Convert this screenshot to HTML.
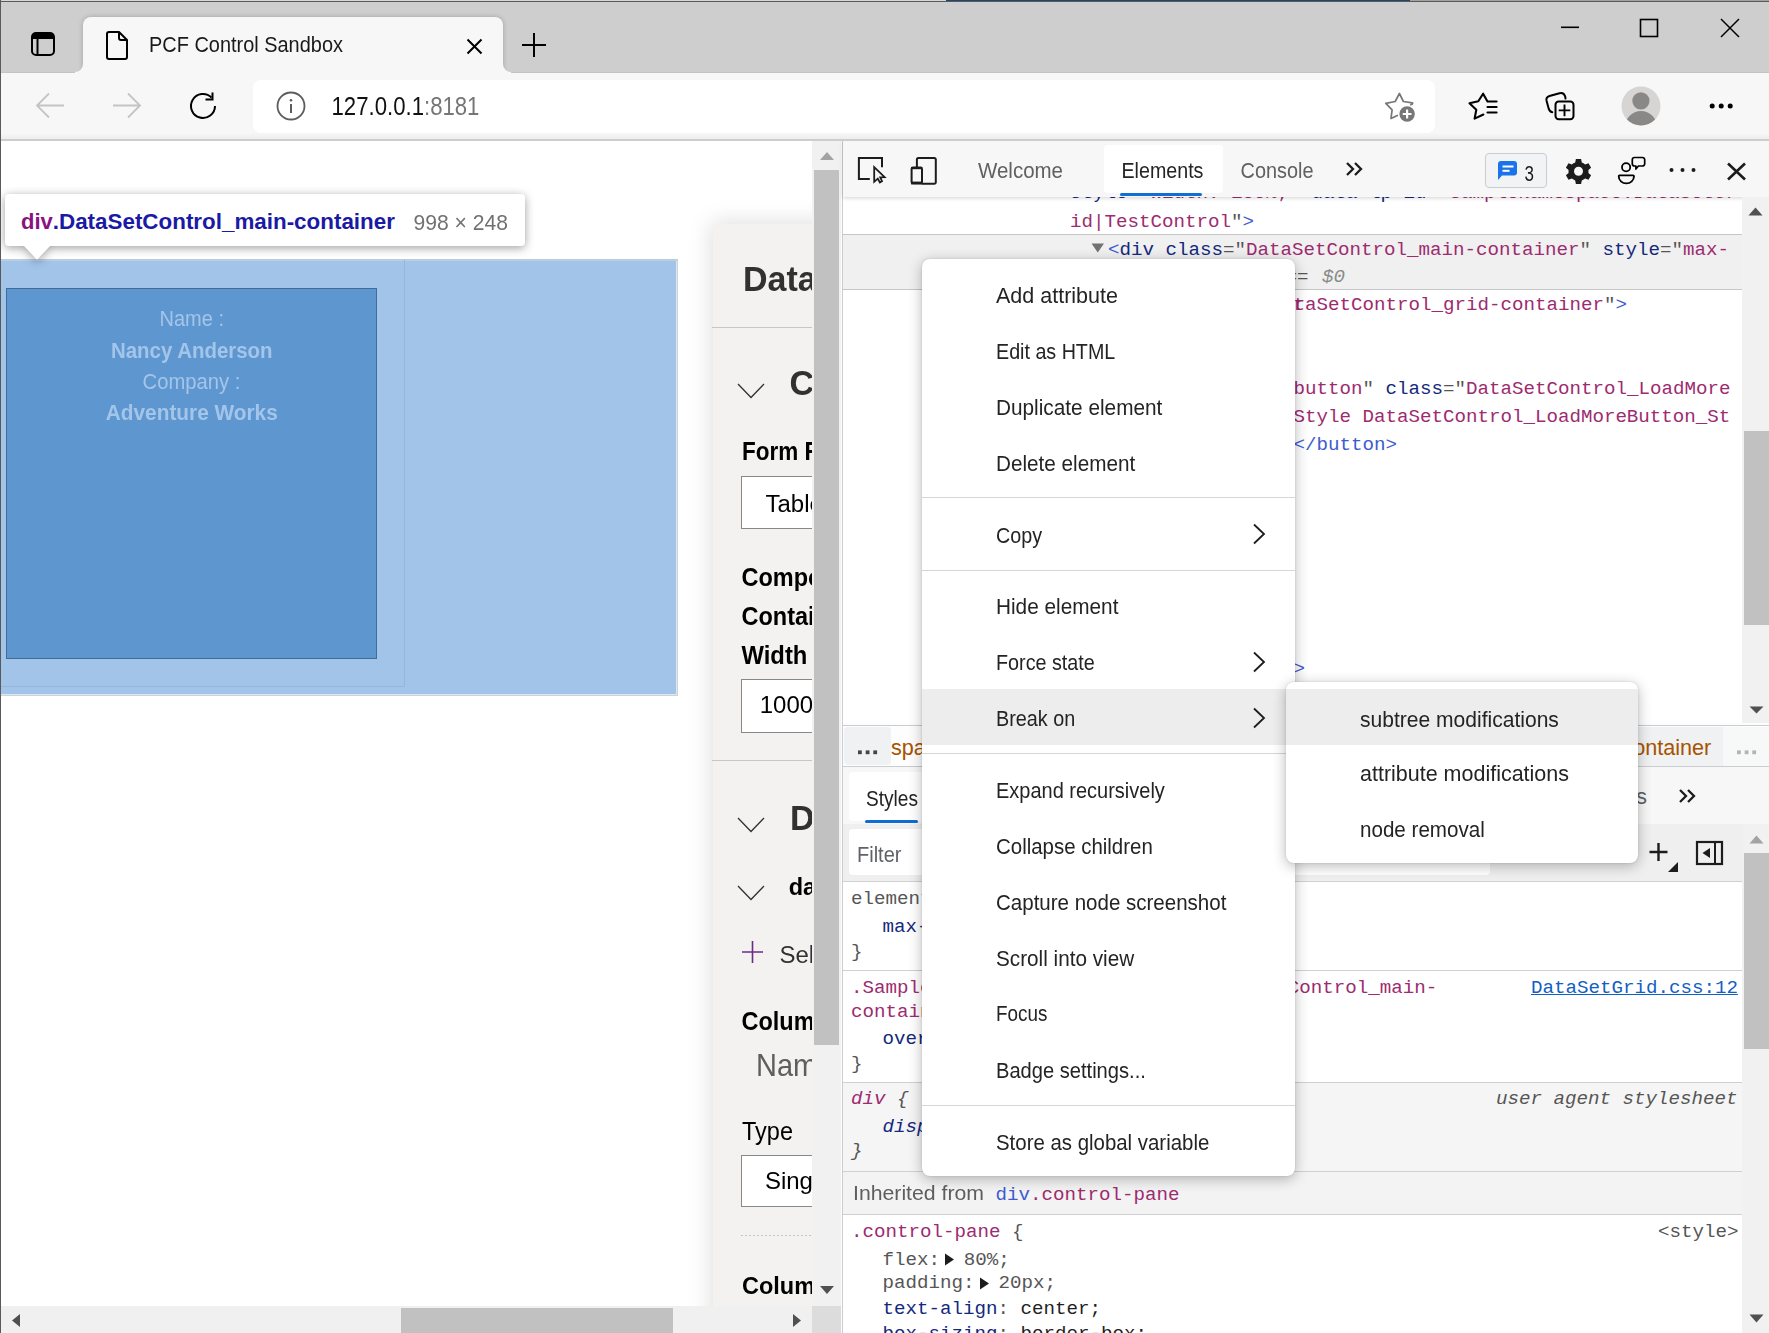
<!DOCTYPE html><html><head><meta charset="utf-8"><style>html,body{margin:0;padding:0;width:1769px;height:1333px;overflow:hidden;position:relative}body{font-family:"Liberation Sans",sans-serif}</style></head><body><div style="position:absolute;left:0.00px;top:0.00px;width:1769.00px;height:1333.00px;background:#ffffff"></div>
<div style="position:absolute;left:0.00px;top:0.00px;width:1769.00px;height:72.00px;background:#cecece"></div>
<div style="position:absolute;left:0.00px;top:0.00px;width:946.00px;height:1.00px;background:#d6d6d6"></div>
<div style="position:absolute;left:946.00px;top:0.00px;width:464.00px;height:1.00px;background:#1f4575"></div>
<div style="position:absolute;left:1410.00px;top:0.00px;width:359.00px;height:1.00px;background:#a3a3a3"></div>
<div style="position:absolute;left:0.00px;top:1.00px;width:1769.00px;height:1.00px;background:#5a5a5a"></div>
<div style="position:absolute;left:0.00px;top:0.00px;width:1.00px;height:1333.00px;background:#5a5a5a"></div>
<svg style="position:absolute;left:30.00px;top:31.00px;" width="27" height="27" viewBox="0 0 27 27"><rect x="2" y="2" width="22" height="22" rx="4" fill="none" stroke="#000" stroke-width="2"/><rect x="2" y="2" width="22" height="6" rx="3" fill="#000"/><rect x="2" y="5" width="22" height="3" fill="#000"/><line x1="7.5" y1="8" x2="7.5" y2="24" stroke="#000" stroke-width="2"/></svg>
<div style="position:absolute;left:0.00px;top:72.00px;width:1769.00px;height:1.00px;background:#c4c4c4"></div>
<div style="position:absolute;left:83.00px;top:17.00px;width:420.00px;height:56.00px;background:#f7f7f7;border-radius:8px 8px 0 0;box-shadow:0 0 5px rgba(0,0,0,0.22)"></div>
<svg style="position:absolute;left:75.00px;top:64.00px;" width="8" height="10" viewBox="0 0 8 10"><path d="M8 0 L8 10 L0 10 L0 8 A8 8 0 0 0 8 0 Z" fill="#f7f7f7"/></svg>
<svg style="position:absolute;left:503.00px;top:64.00px;" width="8" height="10" viewBox="0 0 8 10"><path d="M0 0 L0 10 L8 10 L8 8 A8 8 0 0 1 0 0 Z" fill="#f7f7f7"/></svg>
<svg style="position:absolute;left:104.00px;top:30.00px;" width="26" height="31" viewBox="0 0 26 31"><path d="M3 4 a2 2 0 0 1 2-2 h10 l8 8 v17 a2 2 0 0 1 -2 2 h-16 a2 2 0 0 1 -2-2 z" fill="none" stroke="#000" stroke-width="2" stroke-linejoin="round"/><path d="M15 2 v6 a2 2 0 0 0 2 2 h6" fill="none" stroke="#000" stroke-width="2"/></svg>
<div style="position:absolute;left:149.00px;top:35.92px;font-family:'Liberation Sans', sans-serif;font-size:19.95px;line-height:19.95px;color:#1a1a1a;white-space:pre;transform:scaleY(1.122);transform-origin:0 16.88px;">PCF Control Sandbox</div>
<svg style="position:absolute;left:466.00px;top:38.00px;" width="17" height="17" viewBox="0 0 17 17"><path d="M1.5 1.5 L15.5 15.5 M15.5 1.5 L1.5 15.5" stroke="#000" stroke-width="2"/></svg>
<svg style="position:absolute;left:521.00px;top:32.00px;" width="26" height="26" viewBox="0 0 26 26"><path d="M13 1 V25 M1 13 H25" stroke="#000" stroke-width="2"/></svg>
<svg style="position:absolute;left:1560.00px;top:26.00px;" width="20" height="3" viewBox="0 0 20 3"><rect x="1" y="0.5" width="18" height="1.6" fill="#000"/></svg>
<svg style="position:absolute;left:1639.00px;top:18.00px;" width="20" height="20" viewBox="0 0 20 20"><rect x="1.5" y="1.5" width="17" height="17" fill="none" stroke="#000" stroke-width="1.6"/></svg>
<svg style="position:absolute;left:1720.00px;top:18.00px;" width="20" height="20" viewBox="0 0 20 20"><path d="M1 1 L19 19 M19 1 L1 19" stroke="#000" stroke-width="1.5"/></svg>
<div style="position:absolute;left:0.00px;top:73.00px;width:1769.00px;height:66.00px;background:#f7f7f7"></div>
<div style="position:absolute;left:0.00px;top:139.00px;width:1769.00px;height:2.00px;background:#d0d0d0"></div>
<svg style="position:absolute;left:35.00px;top:92.00px;" width="30" height="27" viewBox="0 0 30 27"><path d="M2 13.5 H29 M14 1.5 L2 13.5 L14 25.5" fill="none" stroke="#c4c4c4" stroke-width="1.8"/></svg>
<svg style="position:absolute;left:112.00px;top:92.00px;" width="30" height="27" viewBox="0 0 30 27"><path d="M1 13.5 H28 M16 1.5 L28 13.5 L16 25.5" fill="none" stroke="#c4c4c4" stroke-width="1.8"/></svg>
<svg style="position:absolute;left:188.00px;top:90.00px;" width="32" height="32" viewBox="0 0 32 32"><path d="M27 16 A12 12 0 1 1 23.5 7.5" fill="none" stroke="#000" stroke-width="2"/><path d="M24.5 2.5 V9.5 H17.5" fill="none" stroke="#000" stroke-width="2"/></svg>
<div style="position:absolute;left:253.00px;top:80.00px;width:1182.00px;height:53.00px;background:#ffffff;border-radius:8px"></div>
<svg style="position:absolute;left:276.00px;top:91.00px;" width="30" height="30" viewBox="0 0 30 30"><circle cx="15" cy="15" r="13.5" fill="none" stroke="#5c5c5c" stroke-width="1.8"/><rect x="14" y="13" width="2" height="9" fill="#5c5c5c"/><circle cx="15" cy="9.3" r="1.3" fill="#5c5c5c"/></svg>
<div style="position:absolute;left:331.50px;top:97.32px;font-family:'Liberation Sans', sans-serif;font-size:22.18px;line-height:22.18px;color:#111111;white-space:pre;transform:scaleY(1.179);transform-origin:0 18.78px;">127.0.0.1<span style="color:#767676">:8181</span></div>
<svg style="position:absolute;left:1380.00px;top:88.00px;overflow:visible;" width="40" height="38" viewBox="1380 88 40 38"><path d="M1410.8 104.7 Q1413.5 103.5 1412.2 102.8 L1403.4 101.5 L1399.4 93.5 L1395.2 101.5 L1385.8 103.4 L1392.1 109.8 L1391 118.5 L1397.3 115.5" fill="none" stroke="#777" stroke-width="1.7" stroke-linejoin="round" stroke-linecap="round"/><circle cx="1407.1" cy="114" r="7.7" fill="#777"/><path d="M1407.1 109.6 V118.4 M1402.7 114 H1411.5" stroke="#fff" stroke-width="2.2"/></svg>
<svg style="position:absolute;left:1465.00px;top:89.00px;overflow:visible;" width="35" height="33" viewBox="1465 89 35 33"><path d="M1496.6 101.5 H1487.5 L1483.1 93.7 L1478.3 101.3 L1469.5 103.2 L1476.3 109.8 L1474.6 118.6 L1483.4 114.5" fill="none" stroke="#000" stroke-width="2.1" stroke-linejoin="round" stroke-linecap="round"/><path d="M1487.5 107 H1496.6 M1487.5 112.5 H1496.6" stroke="#000" stroke-width="2.1" stroke-linecap="round"/></svg>
<svg style="position:absolute;left:1543.00px;top:89.00px;overflow:visible;" width="34" height="34" viewBox="1543 89 34 34"><path d="M1552.3 112.3 Q1549.2 111.5 1548.5 108 L1546.5 100.5 Q1545.8 97.2 1549.5 96 L1559.5 93.2 Q1563.8 92 1565.2 96.5 L1565.5 98.6" fill="none" stroke="#000" stroke-width="2" stroke-linecap="round"/><rect x="1555.5" y="101.5" width="18" height="17.8" rx="3.2" fill="none" stroke="#000" stroke-width="2"/><path d="M1564.5 104.6 V116.2 M1558.7 110.4 H1570.3" stroke="#000" stroke-width="1.9"/></svg>
<svg style="position:absolute;left:1620.00px;top:85.00px;overflow:visible;" width="42" height="42" viewBox="1620 85 42 42"><defs><clipPath id="pc"><circle cx="1641" cy="106" r="19.5"/></clipPath></defs><circle cx="1641" cy="106" r="19.5" fill="#d6d5d3"/><circle cx="1640.9" cy="100.8" r="8.6" fill="#8a8886"/><ellipse cx="1641" cy="127.5" rx="16" ry="16.5" fill="#8a8886" clip-path="url(#pc)"/></svg>
<svg style="position:absolute;left:1705.00px;top:100.00px;overflow:visible;" width="35" height="12" viewBox="1705 100 35 12"><circle cx="1712.2" cy="106" r="2.5" fill="#000"/><circle cx="1721.2" cy="106" r="2.5" fill="#000"/><circle cx="1730.2" cy="106" r="2.5" fill="#000"/></svg>
<div style="position:absolute;left:1.00px;top:140.00px;width:811.00px;height:1166.00px;overflow:hidden;background:#ffffff">
<div style="position:absolute;left:711.50px;top:84.00px;width:130.00px;height:1200.00px;background:#f3f2f1;box-shadow:0 0 22px 2px rgba(0,0,0,0.13)"></div>
<div style="position:absolute;left:711.00px;top:0.00px;width:100.00px;height:1166.00px;overflow:hidden;">
<div style="position:absolute;left:31.00px;top:121.52px;font-family:'Liberation Sans', sans-serif;font-size:34.00px;line-height:34.00px;color:#323130;white-space:pre;font-weight:700;transform:scaleY(1.039);transform-origin:0 28.78px;">DataSet Grid</div>
<div style="position:absolute;left:0.00px;top:187.00px;width:100.00px;height:1.00px;background:#c8c6c4"></div>
<svg style="position:absolute;left:25.00px;top:243.00px;" width="28" height="16" viewBox="0 0 28 16"><path d="M1 1 L14 14.5 L27 1" fill="none" stroke="#323130" stroke-width="1.3"/></svg>
<div style="position:absolute;left:77.40px;top:226.02px;font-family:'Liberation Sans', sans-serif;font-size:34.00px;line-height:34.00px;color:#323130;white-space:pre;font-weight:700;transform:scaleY(1.039);transform-origin:0 28.78px;">Control</div>
<div style="position:absolute;left:30.00px;top:302.35px;font-family:'Liberation Sans', sans-serif;font-size:22.50px;line-height:22.50px;color:#000000;white-space:pre;font-weight:700;transform:scaleY(1.118);transform-origin:0 19.05px;">Form Factor</div>
<div style="position:absolute;left:29.00px;top:336.00px;width:120.00px;height:53.00px;background:#ffffff;border:1px solid #8a8886;box-sizing:border-box"></div>
<div style="position:absolute;left:53.50px;top:351.88px;font-family:'Liberation Sans', sans-serif;font-size:24.00px;line-height:24.00px;color:#000000;white-space:pre;transform:scaleY(1.030);transform-origin:0 20.32px;">Tablet</div>
<div style="position:absolute;left:29.50px;top:427.21px;font-family:'Liberation Sans', sans-serif;font-size:23.50px;line-height:23.50px;color:#000000;white-space:pre;font-weight:700;transform:scaleY(1.070);transform-origin:0 19.89px;">Component</div>
<div style="position:absolute;left:29.50px;top:465.61px;font-family:'Liberation Sans', sans-serif;font-size:23.50px;line-height:23.50px;color:#000000;white-space:pre;font-weight:700;transform:scaleY(1.070);transform-origin:0 19.89px;">Container</div>
<div style="position:absolute;left:29.50px;top:503.65px;font-family:'Liberation Sans', sans-serif;font-size:23.80px;line-height:23.80px;color:#000000;white-space:pre;font-weight:700;transform:scaleY(1.087);transform-origin:0 20.15px;">Width</div>
<div style="position:absolute;left:29.00px;top:538.50px;width:120.00px;height:54.00px;background:#ffffff;border:1px solid #8a8886;box-sizing:border-box"></div>
<div style="position:absolute;left:47.70px;top:553.48px;font-family:'Liberation Sans', sans-serif;font-size:24.00px;line-height:24.00px;color:#000000;white-space:pre;transform:scaleY(0.999);transform-origin:0 20.32px;">1000</div>
<div style="position:absolute;left:0.00px;top:620.00px;width:100.00px;height:1.00px;background:#c8c6c4"></div>
<svg style="position:absolute;left:25.00px;top:677.00px;" width="28" height="16" viewBox="0 0 28 16"><path d="M1 1 L14 14.5 L27 1" fill="none" stroke="#323130" stroke-width="1.3"/></svg>
<div style="position:absolute;left:78.00px;top:660.82px;font-family:'Liberation Sans', sans-serif;font-size:34.00px;line-height:34.00px;color:#323130;white-space:pre;font-weight:700;transform:scaleY(1.039);transform-origin:0 28.78px;">Data Set</div>
<svg style="position:absolute;left:25.00px;top:744.50px;" width="28" height="16" viewBox="0 0 28 16"><path d="M1 1 L14 14.5 L27 1" fill="none" stroke="#323130" stroke-width="1.3"/></svg>
<div style="position:absolute;left:76.70px;top:735.91px;font-family:'Liberation Sans', sans-serif;font-size:23.50px;line-height:23.50px;color:#000000;white-space:pre;font-weight:700;transform:scaleY(1.051);transform-origin:0 19.89px;">dataset</div>
<svg style="position:absolute;left:29.00px;top:800.00px;" width="24" height="24" viewBox="0 0 24 24"><path d="M11.5 1 V23 M1 12 H22" stroke="#6b2c86" stroke-width="1.6"/></svg>
<div style="position:absolute;left:67.40px;top:803.08px;font-family:'Liberation Sans', sans-serif;font-size:24.00px;line-height:24.00px;color:#323130;white-space:pre;transform:scaleY(1.030);transform-origin:0 20.32px;">Select</div>
<div style="position:absolute;left:29.50px;top:870.91px;font-family:'Liberation Sans', sans-serif;font-size:23.50px;line-height:23.50px;color:#000000;white-space:pre;font-weight:700;transform:scaleY(1.070);transform-origin:0 19.89px;">Columns</div>
<div style="position:absolute;left:44.00px;top:911.55px;font-family:'Liberation Sans', sans-serif;font-size:29.00px;line-height:29.00px;color:#605e5c;white-space:pre;transform:scaleY(1.053);transform-origin:0 24.55px;">Name</div>
<div style="position:absolute;left:30.00px;top:980.51px;font-family:'Liberation Sans', sans-serif;font-size:23.50px;line-height:23.50px;color:#000000;white-space:pre;transform:scaleY(1.058);transform-origin:0 19.89px;">Type</div>
<div style="position:absolute;left:29.00px;top:1015.00px;width:120.00px;height:52.00px;background:#ffffff;border:1px solid #8a8886;box-sizing:border-box"></div>
<div style="position:absolute;left:52.90px;top:1028.98px;font-family:'Liberation Sans', sans-serif;font-size:24.00px;line-height:24.00px;color:#000000;white-space:pre;transform:scaleY(0.987);transform-origin:0 20.32px;">Single</div>
<div style="position:absolute;left:29.00px;top:1095.00px;width:71.00px;height:1.00px;background:repeating-linear-gradient(to right,#c8c6c4 0 2px,transparent 2px 4px)"></div>
<div style="position:absolute;left:30.00px;top:1134.71px;font-family:'Liberation Sans', sans-serif;font-size:23.50px;line-height:23.50px;color:#000000;white-space:pre;font-weight:700;transform:scaleY(1.051);transform-origin:0 19.89px;">Columns</div>
</div>
</div>
<div style="position:absolute;left:0.00px;top:259.00px;width:678.00px;height:437.00px;background:#cfd2d6"></div>
<div style="position:absolute;left:1.00px;top:260.00px;width:676.00px;height:435.00px;background:#dce7f4"></div>
<div style="position:absolute;left:1.00px;top:259.00px;width:677.00px;height:1.00px;background:#c0c8d1"></div>
<div style="position:absolute;left:1.00px;top:260.00px;width:676.00px;height:1.00px;background:#b6d1ee"></div>
<div style="position:absolute;left:1.00px;top:261.00px;width:675.00px;height:433.00px;background:#a2c4e8"></div>
<div style="position:absolute;left:404.00px;top:260.00px;width:1.00px;height:427.00px;background:#93b7dc"></div>
<div style="position:absolute;left:1.00px;top:686.00px;width:404.00px;height:1.00px;background:#93b7dc"></div>
<div style="position:absolute;left:6.00px;top:288.00px;width:371.00px;height:371.00px;background:#3f6c99"></div>
<div style="position:absolute;left:7.00px;top:289.00px;width:369.00px;height:369.00px;background:#5e97d0"></div>
<div style="position:absolute;left:159.50px;top:308.86px;font-family:'Liberation Sans', sans-serif;font-size:20.01px;line-height:20.01px;color:#a3c5e9;white-space:pre;transform:scaleY(1.089);transform-origin:0 16.94px;">Name :</div>
<div style="position:absolute;left:111.00px;top:340.50px;font-family:'Liberation Sans', sans-serif;font-size:20.43px;line-height:20.43px;color:#a3c5e9;white-space:pre;font-weight:700;transform:scaleY(1.081);transform-origin:0 17.30px;">Nancy Anderson</div>
<div style="position:absolute;left:142.60px;top:371.68px;font-family:'Liberation Sans', sans-serif;font-size:20.23px;line-height:20.23px;color:#a3c5e9;white-space:pre;transform:scaleY(1.078);transform-origin:0 17.12px;">Company :</div>
<div style="position:absolute;left:105.80px;top:403.17px;font-family:'Liberation Sans', sans-serif;font-size:20.82px;line-height:20.82px;color:#a3c5e9;white-space:pre;font-weight:700;transform:scaleY(1.061);transform-origin:0 17.63px;">Adventure Works</div>
<div style="position:absolute;left:0;top:0;width:1769px;height:1333px;filter:drop-shadow(0 2px 5px rgba(0,0,0,0.38));">
<div style="position:absolute;left:5.00px;top:194.00px;width:520.00px;height:52.00px;background:#ffffff;border-radius:4px"></div>
<svg style="position:absolute;left:22.00px;top:245.00px;" width="30" height="16" viewBox="0 0 30 16"><path d="M1 0 L15 14.8 L29 0 Z" fill="#ffffff"/></svg>
</div>
<div style="position:absolute;left:21.00px;top:211.18px;font-family:'Liberation Sans', sans-serif;font-size:22.00px;line-height:22.00px;color:#881280;white-space:pre;font-weight:700;">div</div>
<div style="position:absolute;left:52.78px;top:210.84px;font-family:'Liberation Sans', sans-serif;font-size:22.40px;line-height:22.40px;color:#1a1aa6;white-space:pre;font-weight:700;">.DataSetControl_main-container</div>
<div style="position:absolute;left:413.50px;top:211.93px;font-family:'Liberation Sans', sans-serif;font-size:21.11px;line-height:21.11px;color:#717171;white-space:pre;transform:scaleY(1.053);transform-origin:0 17.87px;">998 × 248</div>
<div style="position:absolute;left:812.00px;top:140.00px;width:30.00px;height:1166.00px;background:#f1f1f1"></div>
<svg style="position:absolute;left:819.00px;top:151.00px;" width="16" height="10" viewBox="0 0 16 10"><path d="M1 9 L8 1 L15 9 Z" fill="#a3a3a3"/></svg>
<div style="position:absolute;left:814.00px;top:170.00px;width:25.00px;height:875.00px;background:#c1c1c1"></div>
<svg style="position:absolute;left:819.00px;top:1285.00px;" width="16" height="10" viewBox="0 0 16 10"><path d="M1 1 L8 9 L15 1 Z" fill="#505050"/></svg>
<div style="position:absolute;left:1.00px;top:1306.00px;width:811.00px;height:27.00px;background:#f0f0f0"></div>
<svg style="position:absolute;left:10.00px;top:1313.00px;" width="11" height="15" viewBox="0 0 11 15"><path d="M10 1 L2 7.5 L10 14 Z" fill="#505050"/></svg>
<div style="position:absolute;left:401.00px;top:1308.00px;width:272.00px;height:25.00px;background:#c1c1c1"></div>
<svg style="position:absolute;left:792.00px;top:1313.00px;" width="11" height="15" viewBox="0 0 11 15"><path d="M1 1 L9 7.5 L1 14 Z" fill="#505050"/></svg>
<div style="position:absolute;left:812.00px;top:1306.00px;width:30.00px;height:27.00px;background:#dcdcdc"></div>
<div style="position:absolute;left:841.00px;top:140.00px;width:2.00px;height:1193.00px;background:#fdfdfd"></div>
<div style="position:absolute;left:842.00px;top:140.00px;width:1.00px;height:1193.00px;background:#c9ccd1"></div>
<div style="position:absolute;left:843.00px;top:140.00px;width:926.00px;height:1193.00px;background:#ffffff"></div>
<div style="position:absolute;left:843.00px;top:197.00px;width:899.00px;height:526.00px;overflow:hidden;background:#ffffff">
<div style="position:absolute;left:0.00px;top:37.00px;width:899.00px;height:56.00px;background:#f0f0f0"></div>
<div style="position:absolute;left:0.00px;top:37.00px;width:899.00px;height:1.00px;background:#c6c6c6"></div>
<div style="position:absolute;left:0.00px;top:92.00px;width:899.00px;height:1.00px;background:#c6c6c6"></div>
<div style="position:absolute;left:227.00px;top:-12.68px;font-family:'Liberation Mono', monospace;font-size:19.17px;line-height:19.17px;color:#13297d;white-space:pre;">style</div>
<div style="position:absolute;left:284.50px;top:-12.68px;font-family:'Liberation Mono', monospace;font-size:19.17px;line-height:19.17px;color:#565656;white-space:pre;">=&quot;</div>
<div style="position:absolute;left:307.50px;top:-12.68px;font-family:'Liberation Mono', monospace;font-size:19.17px;line-height:19.17px;color:#9d2b6f;white-space:pre;">width: 100%;</div>
<div style="position:absolute;left:445.50px;top:-12.68px;font-family:'Liberation Mono', monospace;font-size:19.17px;line-height:19.17px;color:#565656;white-space:pre;">&quot; </div>
<div style="position:absolute;left:468.50px;top:-12.68px;font-family:'Liberation Mono', monospace;font-size:19.17px;line-height:19.17px;color:#13297d;white-space:pre;">data-lp-id</div>
<div style="position:absolute;left:583.50px;top:-12.68px;font-family:'Liberation Mono', monospace;font-size:19.17px;line-height:19.17px;color:#565656;white-space:pre;">=&quot;</div>
<div style="position:absolute;left:606.50px;top:-12.68px;font-family:'Liberation Mono', monospace;font-size:19.17px;line-height:19.17px;color:#9d2b6f;white-space:pre;">SampleNamespace.DataSetGr</div>
<div style="position:absolute;left:227.00px;top:15.52px;font-family:'Liberation Mono', monospace;font-size:19.17px;line-height:19.17px;color:#9d2b6f;white-space:pre;">id|TestControl</div>
<div style="position:absolute;left:388.00px;top:15.52px;font-family:'Liberation Mono', monospace;font-size:19.17px;line-height:19.17px;color:#565656;white-space:pre;">&quot;</div>
<div style="position:absolute;left:399.50px;top:15.52px;font-family:'Liberation Mono', monospace;font-size:19.17px;line-height:19.17px;color:#3d5bd0;white-space:pre;">&gt;</div>
<svg style="position:absolute;left:248.00px;top:46.00px;" width="14" height="10" viewBox="0 0 14 10"><path d="M0.5 0.5 L13 0.5 L6.75 9.5 Z" fill="#727272"/></svg>
<div style="position:absolute;left:265.00px;top:43.52px;font-family:'Liberation Mono', monospace;font-size:19.17px;line-height:19.17px;color:#3d5bd0;white-space:pre;">&lt;</div>
<div style="position:absolute;left:276.50px;top:43.52px;font-family:'Liberation Mono', monospace;font-size:19.17px;line-height:19.17px;color:#13297d;white-space:pre;">div</div>
<div style="position:absolute;left:311.00px;top:43.52px;font-family:'Liberation Mono', monospace;font-size:19.17px;line-height:19.17px;color:#565656;white-space:pre;"> </div>
<div style="position:absolute;left:322.50px;top:43.52px;font-family:'Liberation Mono', monospace;font-size:19.17px;line-height:19.17px;color:#13297d;white-space:pre;">class</div>
<div style="position:absolute;left:380.00px;top:43.52px;font-family:'Liberation Mono', monospace;font-size:19.17px;line-height:19.17px;color:#565656;white-space:pre;">=&quot;</div>
<div style="position:absolute;left:403.00px;top:43.52px;font-family:'Liberation Mono', monospace;font-size:19.17px;line-height:19.17px;color:#9d2b6f;white-space:pre;">DataSetControl_main-container</div>
<div style="position:absolute;left:736.50px;top:43.52px;font-family:'Liberation Mono', monospace;font-size:19.17px;line-height:19.17px;color:#565656;white-space:pre;">&quot; </div>
<div style="position:absolute;left:759.50px;top:43.52px;font-family:'Liberation Mono', monospace;font-size:19.17px;line-height:19.17px;color:#13297d;white-space:pre;">style</div>
<div style="position:absolute;left:817.00px;top:43.52px;font-family:'Liberation Mono', monospace;font-size:19.17px;line-height:19.17px;color:#565656;white-space:pre;">=&quot;</div>
<div style="position:absolute;left:840.00px;top:43.52px;font-family:'Liberation Mono', monospace;font-size:19.17px;line-height:19.17px;color:#9d2b6f;white-space:pre;">max-</div>
<div style="position:absolute;left:247.10px;top:71.32px;font-family:'Liberation Mono', monospace;font-size:19.17px;line-height:19.17px;color:#9d2b6f;white-space:pre;">width: 1000px;</div>
<div style="position:absolute;left:408.10px;top:71.32px;font-family:'Liberation Mono', monospace;font-size:19.17px;line-height:19.17px;color:#565656;white-space:pre;">&quot;</div>
<div style="position:absolute;left:419.60px;top:71.32px;font-family:'Liberation Mono', monospace;font-size:19.17px;line-height:19.17px;color:#3d5bd0;white-space:pre;">&gt;</div>
<div style="position:absolute;left:431.10px;top:71.32px;font-family:'Liberation Mono', monospace;font-size:19.17px;line-height:19.17px;color:#565656;white-space:pre;"> ==</div>
<div style="position:absolute;left:479.00px;top:71.32px;font-family:'Liberation Mono', monospace;font-size:19.17px;line-height:19.17px;color:#8a8a8a;white-space:pre;font-style:italic;">$0</div>
<div style="position:absolute;left:312.50px;top:99.32px;font-family:'Liberation Mono', monospace;font-size:19.17px;line-height:19.17px;color:#9d2b6f;white-space:pre;">&quot;DataSetContr</div>
<div style="position:absolute;left:450.50px;top:99.32px;font-family:'Liberation Mono', monospace;font-size:19.17px;line-height:19.17px;color:#9d2b6f;white-space:pre;">taSetControl_grid-container</div>
<div style="position:absolute;left:761.00px;top:99.32px;font-family:'Liberation Mono', monospace;font-size:19.17px;line-height:19.17px;color:#565656;white-space:pre;">&quot;</div>
<div style="position:absolute;left:772.50px;top:99.32px;font-family:'Liberation Mono', monospace;font-size:19.17px;line-height:19.17px;color:#3d5bd0;white-space:pre;">&gt;</div>
<div style="position:absolute;left:450.50px;top:183.32px;font-family:'Liberation Mono', monospace;font-size:19.17px;line-height:19.17px;color:#9d2b6f;white-space:pre;">button</div>
<div style="position:absolute;left:519.50px;top:183.32px;font-family:'Liberation Mono', monospace;font-size:19.17px;line-height:19.17px;color:#565656;white-space:pre;">&quot; </div>
<div style="position:absolute;left:542.50px;top:183.32px;font-family:'Liberation Mono', monospace;font-size:19.17px;line-height:19.17px;color:#13297d;white-space:pre;">class</div>
<div style="position:absolute;left:600.00px;top:183.32px;font-family:'Liberation Mono', monospace;font-size:19.17px;line-height:19.17px;color:#565656;white-space:pre;">=&quot;</div>
<div style="position:absolute;left:623.00px;top:183.32px;font-family:'Liberation Mono', monospace;font-size:19.17px;line-height:19.17px;color:#9d2b6f;white-space:pre;">DataSetControl_LoadMore</div>
<div style="position:absolute;left:450.50px;top:211.32px;font-family:'Liberation Mono', monospace;font-size:19.17px;line-height:19.17px;color:#9d2b6f;white-space:pre;">Style DataSetControl_LoadMoreButton_St</div>
<div style="position:absolute;left:450.50px;top:239.32px;font-family:'Liberation Mono', monospace;font-size:19.17px;line-height:19.17px;color:#3d5bd0;white-space:pre;">&lt;/button&gt;</div>
<div style="position:absolute;left:450.50px;top:463.32px;font-family:'Liberation Mono', monospace;font-size:19.17px;line-height:19.17px;color:#3d5bd0;white-space:pre;">&gt;</div>
</div>
<div style="position:absolute;left:843.00px;top:140.00px;width:926.00px;height:57.00px;background:#f7f7f7;box-shadow:0 1px 4px rgba(0,0,0,0.18)"></div>
<svg style="position:absolute;left:852.00px;top:152.00px;overflow:visible;" width="40" height="36" viewBox="852 152 40 36"><path d="M869.8 178.9 H858.9 V158 H882 V167.2" fill="none" stroke="#1c1c1c" stroke-width="2"/><path d="M874.2 167.2 L874.2 181.8 L877.8 178.6 L879.9 182.4 L882 181.2 L880.2 177.3 L884.6 177.1 Z" fill="#f7f7f7" stroke="#1c1c1c" stroke-width="1.8" stroke-linejoin="miter"/></svg>
<svg style="position:absolute;left:905.00px;top:152.00px;overflow:visible;" width="37" height="36" viewBox="905 152 37 36"><path d="M916.9 167 V159.5 a1.5 1.5 0 0 1 1.5-1.5 H934.3 a1.5 1.5 0 0 1 1.5 1.5 V182.3 a1.5 1.5 0 0 1 -1.5 1.5 H921.5" fill="none" stroke="#1c1c1c" stroke-width="2"/><rect x="911.6" y="167.6" width="10.4" height="15.7" rx="1.3" fill="none" stroke="#1c1c1c" stroke-width="2"/><rect x="911" y="181.6" width="11" height="2.8" fill="#1c1c1c"/><rect x="911" y="167" width="11" height="2.2" fill="#1c1c1c"/></svg>
<div style="position:absolute;left:978.00px;top:161.26px;font-family:'Liberation Sans', sans-serif;font-size:20.49px;line-height:20.49px;color:#606060;white-space:pre;transform:scaleY(1.093);transform-origin:0 17.34px;">Welcome</div>
<div style="position:absolute;left:1104.00px;top:145.00px;width:119.00px;height:48.00px;background:#ffffff;border-radius:4px"></div>
<div style="position:absolute;left:1120.00px;top:193.00px;width:82.00px;height:3.00px;background:#0f6fd6;border-radius:2px"></div>
<div style="position:absolute;left:1121.50px;top:161.95px;font-family:'Liberation Sans', sans-serif;font-size:19.67px;line-height:19.67px;color:#242424;white-space:pre;transform:scaleY(1.138);transform-origin:0 16.65px;">Elements</div>
<div style="position:absolute;left:1240.60px;top:161.76px;font-family:'Liberation Sans', sans-serif;font-size:19.90px;line-height:19.90px;color:#606060;white-space:pre;transform:scaleY(1.125);transform-origin:0 16.84px;">Console</div>
<svg style="position:absolute;left:1345.00px;top:161.00px;" width="20" height="16" viewBox="0 0 20 16"><path d="M2 2 L8 8 L2 14 M10 2 L16 8 L10 14" fill="none" stroke="#1c1c1c" stroke-width="2.3"/></svg>
<div style="position:absolute;left:1485.00px;top:153.00px;width:61.50px;height:35.00px;background:#f2f3f5;border:1px solid #c9ccd1;border-radius:4px;box-sizing:border-box"></div>
<svg style="position:absolute;left:1497.00px;top:160.00px;" width="22" height="22" viewBox="0 0 22 22"><path d="M4 1 H17 a3 3 0 0 1 3 3 V12.5 a3 3 0 0 1 -3 3 H5 L1 20 V4 a3 3 0 0 1 3-3 Z" fill="#1a73e8"/><rect x="5.5" y="5.5" width="11" height="2" fill="#ffffff"/><rect x="5.5" y="9.8" width="7" height="2" fill="#ffffff"/></svg>
<div style="position:absolute;left:1524.40px;top:166.61px;font-family:'Liberation Sans', sans-serif;font-size:17.00px;line-height:17.00px;color:#1a1a1a;white-space:pre;transform:scaleY(1.265);transform-origin:0 14.39px;">3</div>
<svg style="position:absolute;left:1565.00px;top:158.00px;" width="27" height="27" viewBox="0 0 27 27"><g transform="translate(13.5,13.5)"><path d="M-2.6,-12.5 L2.6,-12.5 L3.3,-9 A9.3 9.3 0 0 1 6.6,-7.1 L10,-8.3 L12.6,-3.8 L9.9,-1.5 A9.3 9.3 0 0 1 9.9,1.5 L12.6,3.8 L10,8.3 L6.6,7.1 A9.3 9.3 0 0 1 3.3,9 L2.6,12.5 L-2.6,12.5 L-3.3,9 A9.3 9.3 0 0 1 -6.6,7.1 L-10,8.3 L-12.6,3.8 L-9.9,1.5 A9.3 9.3 0 0 1 -9.9,-1.5 L-12.6,-3.8 L-10,-8.3 L-6.6,-7.1 A9.3 9.3 0 0 1 -3.3,-9 Z" fill="#1c1c1c"/><circle cy="-0.3" r="4.5" fill="#f7f7f7"/></g></svg>
<svg style="position:absolute;left:1612.00px;top:152.00px;overflow:visible;" width="38" height="36" viewBox="1612 152 38 36"><circle cx="1626.1" cy="167.3" r="4.1" fill="none" stroke="#000" stroke-width="1.8"/><path d="M1619.6 175.3 H1633.1 a0.9 0.9 0 0 1 0.9 0.9 A7.6 7.2 0 0 1 1618.7 176.2 a0.9 0.9 0 0 1 0.9-0.9 Z" fill="none" stroke="#000" stroke-width="1.8" stroke-linejoin="round"/><path d="M1634.6 157.5 H1642.4 a2.3 2.3 0 0 1 2.3 2.3 V163.7 a2.3 2.3 0 0 1 -2.3 2.3 H1638.4 L1635.9 169 V166 H1634.6 a2.3 2.3 0 0 1 -2.3-2.3 V159.8 a2.3 2.3 0 0 1 2.3-2.3 Z" fill="none" stroke="#000" stroke-width="1.7" stroke-linejoin="round"/></svg>
<svg style="position:absolute;left:1668.00px;top:166.00px;" width="31" height="8" viewBox="0 0 31 8"><circle cx="3.5" cy="4" r="2" fill="#1c1c1c"/><circle cx="14.5" cy="4" r="2" fill="#1c1c1c"/><circle cx="25.5" cy="4" r="2" fill="#1c1c1c"/></svg>
<svg style="position:absolute;left:1726.00px;top:162.00px;" width="21" height="19" viewBox="0 0 21 19"><path d="M2 1.5 L19 17.5 M19 1.5 L2 17.5" stroke="#1c1c1c" stroke-width="2.6"/></svg>
<div style="position:absolute;left:1742.00px;top:197.00px;width:27.00px;height:526.00px;background:#f1f1f1"></div>
<svg style="position:absolute;left:1748.00px;top:207.00px;" width="15" height="9" viewBox="0 0 15 9"><path d="M0.5 8.5 L7.5 0.5 L14.5 8.5 Z" fill="#505050"/></svg>
<div style="position:absolute;left:1744.00px;top:431.00px;width:25.00px;height:194.00px;background:#c1c1c1"></div>
<svg style="position:absolute;left:1749.00px;top:705.50px;" width="15" height="8" viewBox="0 0 15 8"><path d="M0.5 0.5 L7.5 7.5 L14.5 0.5 Z" fill="#505050"/></svg>
<div style="position:absolute;left:843.00px;top:723.00px;width:926.00px;height:44.00px;background:#fdfdfd"></div>
<div style="position:absolute;left:843.00px;top:724.80px;width:926.00px;height:1.20px;background:#c9ccd1"></div>
<div style="position:absolute;left:843.00px;top:766.00px;width:926.00px;height:1.20px;background:#c9ccd1"></div>
<div style="position:absolute;left:844.00px;top:726.50px;width:47.00px;height:38.50px;background:#eff1f3;border-radius:4px"></div>
<svg style="position:absolute;left:857.00px;top:750.00px;" width="22" height="5" viewBox="0 0 22 5"><rect x="1" y="0.4" width="3.8" height="3.8" fill="#454545"/><rect x="8.7" y="0.4" width="3.8" height="3.8" fill="#454545"/><rect x="16.3" y="0.4" width="3.8" height="3.8" fill="#454545"/></svg>
<div style="position:absolute;left:890.90px;top:737.22px;font-family:'Liberation Sans', sans-serif;font-size:21.60px;line-height:21.60px;color:#a65300;white-space:pre;">span.DataSetControl_main-container</div>
<div style="position:absolute;left:1300.00px;top:726.50px;width:423.00px;height:39.50px;background:#eff1f3"></div>
<div style="position:absolute;left:1376.75px;top:737.32px;font-family:'Liberation Sans', sans-serif;font-size:21.60px;line-height:21.60px;color:#a65300;white-space:pre;">div.DataSetControl_main-container</div>
<div style="position:absolute;left:1723.00px;top:726.50px;width:46.00px;height:39.50px;background:#f7f8f8"></div>
<svg style="position:absolute;left:1736.00px;top:750.00px;" width="24" height="5" viewBox="0 0 24 5"><rect x="1" y="0.4" width="3.8" height="3.8" fill="#b3b3b3"/><rect x="8.7" y="0.4" width="3.8" height="3.8" fill="#b3b3b3"/><rect x="16.3" y="0.4" width="3.8" height="3.8" fill="#b3b3b3"/></svg>
<div style="position:absolute;left:843.00px;top:767.00px;width:926.00px;height:57.00px;background:#f7f7f7"></div>
<div style="position:absolute;left:849.00px;top:772.00px;width:100.00px;height:49.00px;background:#ffffff;border-radius:4px"></div>
<div style="position:absolute;left:865.00px;top:820.00px;width:53.00px;height:3.00px;background:#0f6cd5;border-radius:2px"></div>
<div style="position:absolute;left:866.00px;top:789.64px;font-family:'Liberation Sans', sans-serif;font-size:19.10px;line-height:19.10px;color:#242424;white-space:pre;transform:scaleY(1.142);transform-origin:0 16.16px;">Styles</div>
<div style="position:absolute;left:1560.00px;top:786.65px;font-family:'Liberation Sans', sans-serif;font-size:21.44px;line-height:21.44px;color:#606060;white-space:pre;">Listeners</div>
<svg style="position:absolute;left:1678.00px;top:788.00px;" width="20" height="16" viewBox="0 0 20 16"><path d="M2 2 L8 8 L2 14 M10 2 L16 8 L10 14" fill="none" stroke="#1c1c1c" stroke-width="2.3"/></svg>
<div style="position:absolute;left:843.00px;top:824.00px;width:926.00px;height:57.00px;background:#efefef"></div>
<div style="position:absolute;left:849.00px;top:829.00px;width:641.00px;height:46.00px;background:#ffffff;border-radius:4px"></div>
<div style="position:absolute;left:857.00px;top:844.85px;font-family:'Liberation Sans', sans-serif;font-size:20.03px;line-height:20.03px;color:#5f6368;white-space:pre;transform:scaleY(1.089);transform-origin:0 16.95px;">Filter</div>
<svg style="position:absolute;left:1649.00px;top:842.00px;" width="20" height="20" viewBox="0 0 20 20"><path d="M9.5 1 V19 M0.5 10 H18.5" stroke="#1c1c1c" stroke-width="2.4"/></svg>
<svg style="position:absolute;left:1667.00px;top:861.00px;" width="12" height="12" viewBox="0 0 12 12"><path d="M11 1 L11 11 L1 11 Z" fill="#1c1c1c"/></svg>
<svg style="position:absolute;left:1695.00px;top:840.00px;" width="30" height="26" viewBox="0 0 30 26"><rect x="2" y="2" width="25" height="22" fill="none" stroke="#1c1c1c" stroke-width="2.2"/><line x1="20" y1="2" x2="20" y2="24" stroke="#1c1c1c" stroke-width="2"/><path d="M15 8 L15 18 L7.5 13 Z" fill="#1c1c1c"/></svg>
<div style="position:absolute;left:843.00px;top:881.00px;width:899.00px;height:1.00px;background:#d0d0d0"></div>
<div style="position:absolute;left:1742.00px;top:824.00px;width:27.00px;height:509.00px;background:#f1f1f1"></div>
<svg style="position:absolute;left:1749.00px;top:835.00px;" width="15" height="9" viewBox="0 0 15 9"><path d="M0.5 8.5 L7.5 0.5 L14.5 8.5 Z" fill="#a3a3a3"/></svg>
<div style="position:absolute;left:1744.00px;top:853.00px;width:25.00px;height:196.00px;background:#c1c1c1"></div>
<svg style="position:absolute;left:1749.00px;top:1314.00px;" width="15" height="9" viewBox="0 0 15 9"><path d="M0.5 0.5 L7.5 8.5 L14.5 0.5 Z" fill="#505050"/></svg>
<div style="position:absolute;left:843.00px;top:882.00px;width:899.00px;height:451.00px;overflow:hidden;background:#ffffff">
<div style="position:absolute;left:8.00px;top:7.72px;font-family:'Liberation Mono', monospace;font-size:19.17px;line-height:19.17px;color:#565656;white-space:pre;">element.style {</div>
<div style="position:absolute;left:39.60px;top:35.72px;font-family:'Liberation Mono', monospace;font-size:19.17px;line-height:19.17px;color:#13297d;white-space:pre;">max-width</div>
<div style="position:absolute;left:143.10px;top:35.72px;font-family:'Liberation Mono', monospace;font-size:19.17px;line-height:19.17px;color:#565656;white-space:pre;">: </div>
<div style="position:absolute;left:166.10px;top:35.72px;font-family:'Liberation Mono', monospace;font-size:19.17px;line-height:19.17px;color:#565656;white-space:pre;">1000px</div>
<div style="position:absolute;left:235.10px;top:35.72px;font-family:'Liberation Mono', monospace;font-size:19.17px;line-height:19.17px;color:#565656;white-space:pre;">;</div>
<div style="position:absolute;left:8.00px;top:60.62px;font-family:'Liberation Mono', monospace;font-size:19.17px;line-height:19.17px;color:#565656;white-space:pre;">}</div>
<div style="position:absolute;left:0.00px;top:88.00px;width:899.00px;height:1.00px;background:#d0d0d0"></div>
<div style="position:absolute;left:8.00px;top:96.72px;font-family:'Liberation Mono', monospace;font-size:19.17px;line-height:19.17px;color:#9d2b6f;white-space:pre;">.SampleNamespace.DataSetGrid  .DataSetControl_main-</div>
<div style="position:absolute;left:8.00px;top:120.52px;font-family:'Liberation Mono', monospace;font-size:19.17px;line-height:19.17px;color:#9d2b6f;white-space:pre;">container</div>
<div style="position:absolute;left:111.50px;top:120.52px;font-family:'Liberation Mono', monospace;font-size:19.17px;line-height:19.17px;color:#565656;white-space:pre;"> {</div>
<div style="position:absolute;left:688.00px;top:96.72px;font-family:'Liberation Mono', monospace;font-size:19.17px;line-height:19.17px;color:#1160c4;white-space:pre;text-decoration:underline;">DataSetGrid.css:12</div>
<div style="position:absolute;left:39.60px;top:147.92px;font-family:'Liberation Mono', monospace;font-size:19.17px;line-height:19.17px;color:#13297d;white-space:pre;">overflow</div>
<div style="position:absolute;left:131.60px;top:147.92px;font-family:'Liberation Mono', monospace;font-size:19.17px;line-height:19.17px;color:#565656;white-space:pre;">: </div>
<div style="position:absolute;left:154.60px;top:147.92px;font-family:'Liberation Mono', monospace;font-size:19.17px;line-height:19.17px;color:#565656;white-space:pre;">auto</div>
<div style="position:absolute;left:200.60px;top:147.92px;font-family:'Liberation Mono', monospace;font-size:19.17px;line-height:19.17px;color:#565656;white-space:pre;">;</div>
<div style="position:absolute;left:8.00px;top:172.62px;font-family:'Liberation Mono', monospace;font-size:19.17px;line-height:19.17px;color:#565656;white-space:pre;">}</div>
<div style="position:absolute;left:0.00px;top:200.00px;width:899.00px;height:1.00px;background:#d0d0d0"></div>
<div style="position:absolute;left:0.00px;top:201.00px;width:899.00px;height:88.00px;background:#f5f5f5"></div>
<div style="position:absolute;left:8.00px;top:208.12px;font-family:'Liberation Mono', monospace;font-size:19.17px;line-height:19.17px;color:#9d2b6f;white-space:pre;font-style:italic;">div</div>
<div style="position:absolute;left:42.50px;top:208.12px;font-family:'Liberation Mono', monospace;font-size:19.17px;line-height:19.17px;color:#565656;white-space:pre;font-style:italic;"> {</div>
<div style="position:absolute;left:653.00px;top:208.12px;font-family:'Liberation Mono', monospace;font-size:19.17px;line-height:19.17px;color:#555555;white-space:pre;font-style:italic;">user agent stylesheet</div>
<div style="position:absolute;left:39.60px;top:235.82px;font-family:'Liberation Mono', monospace;font-size:19.17px;line-height:19.17px;color:#13297d;white-space:pre;font-style:italic;">display</div>
<div style="position:absolute;left:120.10px;top:235.82px;font-family:'Liberation Mono', monospace;font-size:19.17px;line-height:19.17px;color:#565656;white-space:pre;font-style:italic;">: </div>
<div style="position:absolute;left:143.10px;top:235.82px;font-family:'Liberation Mono', monospace;font-size:19.17px;line-height:19.17px;color:#565656;white-space:pre;font-style:italic;">block</div>
<div style="position:absolute;left:200.60px;top:235.82px;font-family:'Liberation Mono', monospace;font-size:19.17px;line-height:19.17px;color:#565656;white-space:pre;font-style:italic;">;</div>
<div style="position:absolute;left:8.00px;top:260.12px;font-family:'Liberation Mono', monospace;font-size:19.17px;line-height:19.17px;color:#565656;white-space:pre;font-style:italic;">}</div>
<div style="position:absolute;left:0.00px;top:289.00px;width:899.00px;height:1.00px;background:#d0d0d0"></div>
<div style="position:absolute;left:0.00px;top:290.00px;width:899.00px;height:42.00px;background:#f3f3f3"></div>
<div style="position:absolute;left:10.00px;top:300.52px;font-family:'Liberation Sans', sans-serif;font-size:21.24px;line-height:21.24px;color:#5e5e5e;white-space:pre;transform:scaleY(0.986);transform-origin:0 17.98px;">Inherited from</div>
<div style="position:absolute;left:152.60px;top:303.82px;font-family:'Liberation Mono', monospace;font-size:19.17px;line-height:19.17px;color:#3d5bd0;white-space:pre;">div</div>
<div style="position:absolute;left:187.10px;top:303.82px;font-family:'Liberation Mono', monospace;font-size:19.17px;line-height:19.17px;color:#9d2b6f;white-space:pre;">.control-pane</div>
<div style="position:absolute;left:0.00px;top:332.00px;width:899.00px;height:1.00px;background:#d0d0d0"></div>
<div style="position:absolute;left:8.00px;top:340.62px;font-family:'Liberation Mono', monospace;font-size:19.17px;line-height:19.17px;color:#9d2b6f;white-space:pre;">.control-pane</div>
<div style="position:absolute;left:157.50px;top:340.62px;font-family:'Liberation Mono', monospace;font-size:19.17px;line-height:19.17px;color:#565656;white-space:pre;"> {</div>
<div style="position:absolute;left:815.00px;top:340.62px;font-family:'Liberation Mono', monospace;font-size:19.17px;line-height:19.17px;color:#555555;white-space:pre;">&lt;style&gt;</div>
<div style="position:absolute;left:39.60px;top:368.92px;font-family:'Liberation Mono', monospace;font-size:19.17px;line-height:19.17px;color:#565656;white-space:pre;">flex:</div>
<svg style="position:absolute;left:101.00px;top:371.00px;" width="11" height="13" viewBox="0 0 11 13"><path d="M1 0.5 L10 6.5 L1 12.5 Z" fill="#1c1c1c"/></svg>
<div style="position:absolute;left:120.80px;top:368.92px;font-family:'Liberation Mono', monospace;font-size:19.17px;line-height:19.17px;color:#565656;white-space:pre;">80%;</div>
<div style="position:absolute;left:39.60px;top:392.42px;font-family:'Liberation Mono', monospace;font-size:19.17px;line-height:19.17px;color:#565656;white-space:pre;">padding:</div>
<svg style="position:absolute;left:136.00px;top:395.00px;" width="11" height="13" viewBox="0 0 11 13"><path d="M1 0.5 L10 6.5 L1 12.5 Z" fill="#1c1c1c"/></svg>
<div style="position:absolute;left:155.60px;top:392.42px;font-family:'Liberation Mono', monospace;font-size:19.17px;line-height:19.17px;color:#565656;white-space:pre;">20px;</div>
<div style="position:absolute;left:39.60px;top:418.12px;font-family:'Liberation Mono', monospace;font-size:19.17px;line-height:19.17px;color:#13297d;white-space:pre;">text-align</div>
<div style="position:absolute;left:154.60px;top:418.12px;font-family:'Liberation Mono', monospace;font-size:19.17px;line-height:19.17px;color:#565656;white-space:pre;">: </div>
<div style="position:absolute;left:177.60px;top:418.12px;font-family:'Liberation Mono', monospace;font-size:19.17px;line-height:19.17px;color:#1f1f1f;white-space:pre;">center;</div>
<div style="position:absolute;left:39.60px;top:442.62px;font-family:'Liberation Mono', monospace;font-size:19.17px;line-height:19.17px;color:#13297d;white-space:pre;">box-sizing</div>
<div style="position:absolute;left:154.60px;top:442.62px;font-family:'Liberation Mono', monospace;font-size:19.17px;line-height:19.17px;color:#565656;white-space:pre;">: </div>
<div style="position:absolute;left:177.60px;top:442.62px;font-family:'Liberation Mono', monospace;font-size:19.17px;line-height:19.17px;color:#1f1f1f;white-space:pre;">border-box;</div>
</div>
<div style="position:absolute;left:922.00px;top:259.00px;width:373.00px;height:917.00px;background:#ffffff;border-radius:8px;box-shadow:0 3px 14px rgba(0,0,0,0.28), 0 0 2px rgba(0,0,0,0.15);"></div>
<div style="position:absolute;left:922.00px;top:689.00px;width:364.00px;height:56.00px;background:#ededed"></div>
<div style="position:absolute;left:996.00px;top:285.50px;font-family:'Liberation Sans', sans-serif;font-size:21.50px;line-height:21.50px;color:#242424;white-space:pre;transform:scaleY(1.034);transform-origin:0 18.20px;">Add attribute</div>
<div style="position:absolute;left:996.00px;top:342.91px;font-family:'Liberation Sans', sans-serif;font-size:19.71px;line-height:19.71px;color:#242424;white-space:pre;transform:scaleY(1.128);transform-origin:0 16.69px;">Edit as HTML</div>
<div style="position:absolute;left:996.00px;top:398.10px;font-family:'Liberation Sans', sans-serif;font-size:20.79px;line-height:20.79px;color:#242424;white-space:pre;transform:scaleY(1.070);transform-origin:0 17.60px;">Duplicate element</div>
<div style="position:absolute;left:996.00px;top:453.98px;font-family:'Liberation Sans', sans-serif;font-size:20.70px;line-height:20.70px;color:#242424;white-space:pre;transform:scaleY(1.074);transform-origin:0 17.52px;">Delete element</div>
<div style="position:absolute;left:996.00px;top:526.68px;font-family:'Liberation Sans', sans-serif;font-size:19.75px;line-height:19.75px;color:#242424;white-space:pre;transform:scaleY(1.126);transform-origin:0 16.72px;">Copy</div>
<div style="position:absolute;left:996.00px;top:597.40px;font-family:'Liberation Sans', sans-serif;font-size:20.79px;line-height:20.79px;color:#242424;white-space:pre;transform:scaleY(1.070);transform-origin:0 17.60px;">Hide element</div>
<div style="position:absolute;left:996.00px;top:654.18px;font-family:'Liberation Sans', sans-serif;font-size:19.75px;line-height:19.75px;color:#242424;white-space:pre;transform:scaleY(1.126);transform-origin:0 16.72px;">Force state</div>
<div style="position:absolute;left:996.00px;top:710.03px;font-family:'Liberation Sans', sans-serif;font-size:19.81px;line-height:19.81px;color:#242424;white-space:pre;transform:scaleY(1.122);transform-origin:0 16.77px;">Break on</div>
<div style="position:absolute;left:996.00px;top:781.48px;font-family:'Liberation Sans', sans-serif;font-size:19.99px;line-height:19.99px;color:#242424;white-space:pre;transform:scaleY(1.112);transform-origin:0 16.92px;">Expand recursively</div>
<div style="position:absolute;left:996.00px;top:837.10px;font-family:'Liberation Sans', sans-serif;font-size:20.44px;line-height:20.44px;color:#242424;white-space:pre;transform:scaleY(1.088);transform-origin:0 17.30px;">Collapse children</div>
<div style="position:absolute;left:996.00px;top:893.22px;font-family:'Liberation Sans', sans-serif;font-size:20.53px;line-height:20.53px;color:#242424;white-space:pre;transform:scaleY(1.083);transform-origin:0 17.38px;">Capture node screenshot</div>
<div style="position:absolute;left:996.00px;top:948.86px;font-family:'Liberation Sans', sans-serif;font-size:20.72px;line-height:20.72px;color:#242424;white-space:pre;transform:scaleY(1.073);transform-origin:0 17.54px;">Scroll into view</div>
<div style="position:absolute;left:996.00px;top:1006.42px;font-family:'Liberation Sans', sans-serif;font-size:18.88px;line-height:18.88px;color:#242424;white-space:pre;transform:scaleY(1.178);transform-origin:0 15.98px;">Focus</div>
<div style="position:absolute;left:996.00px;top:1061.18px;font-family:'Liberation Sans', sans-serif;font-size:20.11px;line-height:20.11px;color:#242424;white-space:pre;transform:scaleY(1.106);transform-origin:0 17.02px;">Badge settings...</div>
<div style="position:absolute;left:996.00px;top:1132.52px;font-family:'Liberation Sans', sans-serif;font-size:20.41px;line-height:20.41px;color:#242424;white-space:pre;transform:scaleY(1.090);transform-origin:0 17.28px;">Store as global variable</div>
<div style="position:absolute;left:922.00px;top:497.00px;width:373.00px;height:1.30px;background:#d6d6d6"></div>
<div style="position:absolute;left:922.00px;top:569.50px;width:373.00px;height:1.30px;background:#d6d6d6"></div>
<div style="position:absolute;left:922.00px;top:753.00px;width:373.00px;height:1.30px;background:#d6d6d6"></div>
<div style="position:absolute;left:922.00px;top:1104.50px;width:373.00px;height:1.30px;background:#d6d6d6"></div>
<svg style="position:absolute;left:1251.00px;top:523.00px;" width="16" height="22" viewBox="0 0 16 22"><path d="M3 1.5 L13 11 L3 20.5" fill="none" stroke="#1c1c1c" stroke-width="1.8"/></svg>
<svg style="position:absolute;left:1251.00px;top:651.00px;" width="16" height="22" viewBox="0 0 16 22"><path d="M3 1.5 L13 11 L3 20.5" fill="none" stroke="#1c1c1c" stroke-width="1.8"/></svg>
<svg style="position:absolute;left:1251.00px;top:707.00px;" width="16" height="22" viewBox="0 0 16 22"><path d="M3 1.5 L13 11 L3 20.5" fill="none" stroke="#1c1c1c" stroke-width="1.8"/></svg>
<div style="position:absolute;left:1286.00px;top:682.00px;width:352.00px;height:181.00px;background:#ffffff;border-radius:8px;box-shadow:0 3px 14px rgba(0,0,0,0.28), 0 0 2px rgba(0,0,0,0.15);"></div>
<div style="position:absolute;left:1286.00px;top:689.00px;width:352.00px;height:56.00px;background:#ededed"></div>
<div style="position:absolute;left:1360.00px;top:708.97px;font-family:'Liberation Sans', sans-serif;font-size:21.06px;line-height:21.06px;color:#242424;white-space:pre;transform:scaleY(1.056);transform-origin:0 17.83px;">subtree modifications</div>
<div style="position:absolute;left:1360.00px;top:764.01px;font-family:'Liberation Sans', sans-serif;font-size:21.49px;line-height:21.49px;color:#242424;white-space:pre;transform:scaleY(1.035);transform-origin:0 18.19px;">attribute modifications</div>
<div style="position:absolute;left:1360.00px;top:820.46px;font-family:'Liberation Sans', sans-serif;font-size:20.60px;line-height:20.60px;color:#242424;white-space:pre;transform:scaleY(1.080);transform-origin:0 17.44px;">node removal</div>
<div style="position:absolute;left:0.00px;top:133.00px;width:1769.00px;height:6.00px;background:linear-gradient(#f7f7f7,#eeeeee)"></div>
<div style="position:absolute;left:0.00px;top:139.00px;width:1769.00px;height:2.00px;background:#cdcdcd"></div>
<div style="position:absolute;left:0.00px;top:0.00px;width:1.00px;height:1333.00px;background:#5a5a5a"></div></body></html>
